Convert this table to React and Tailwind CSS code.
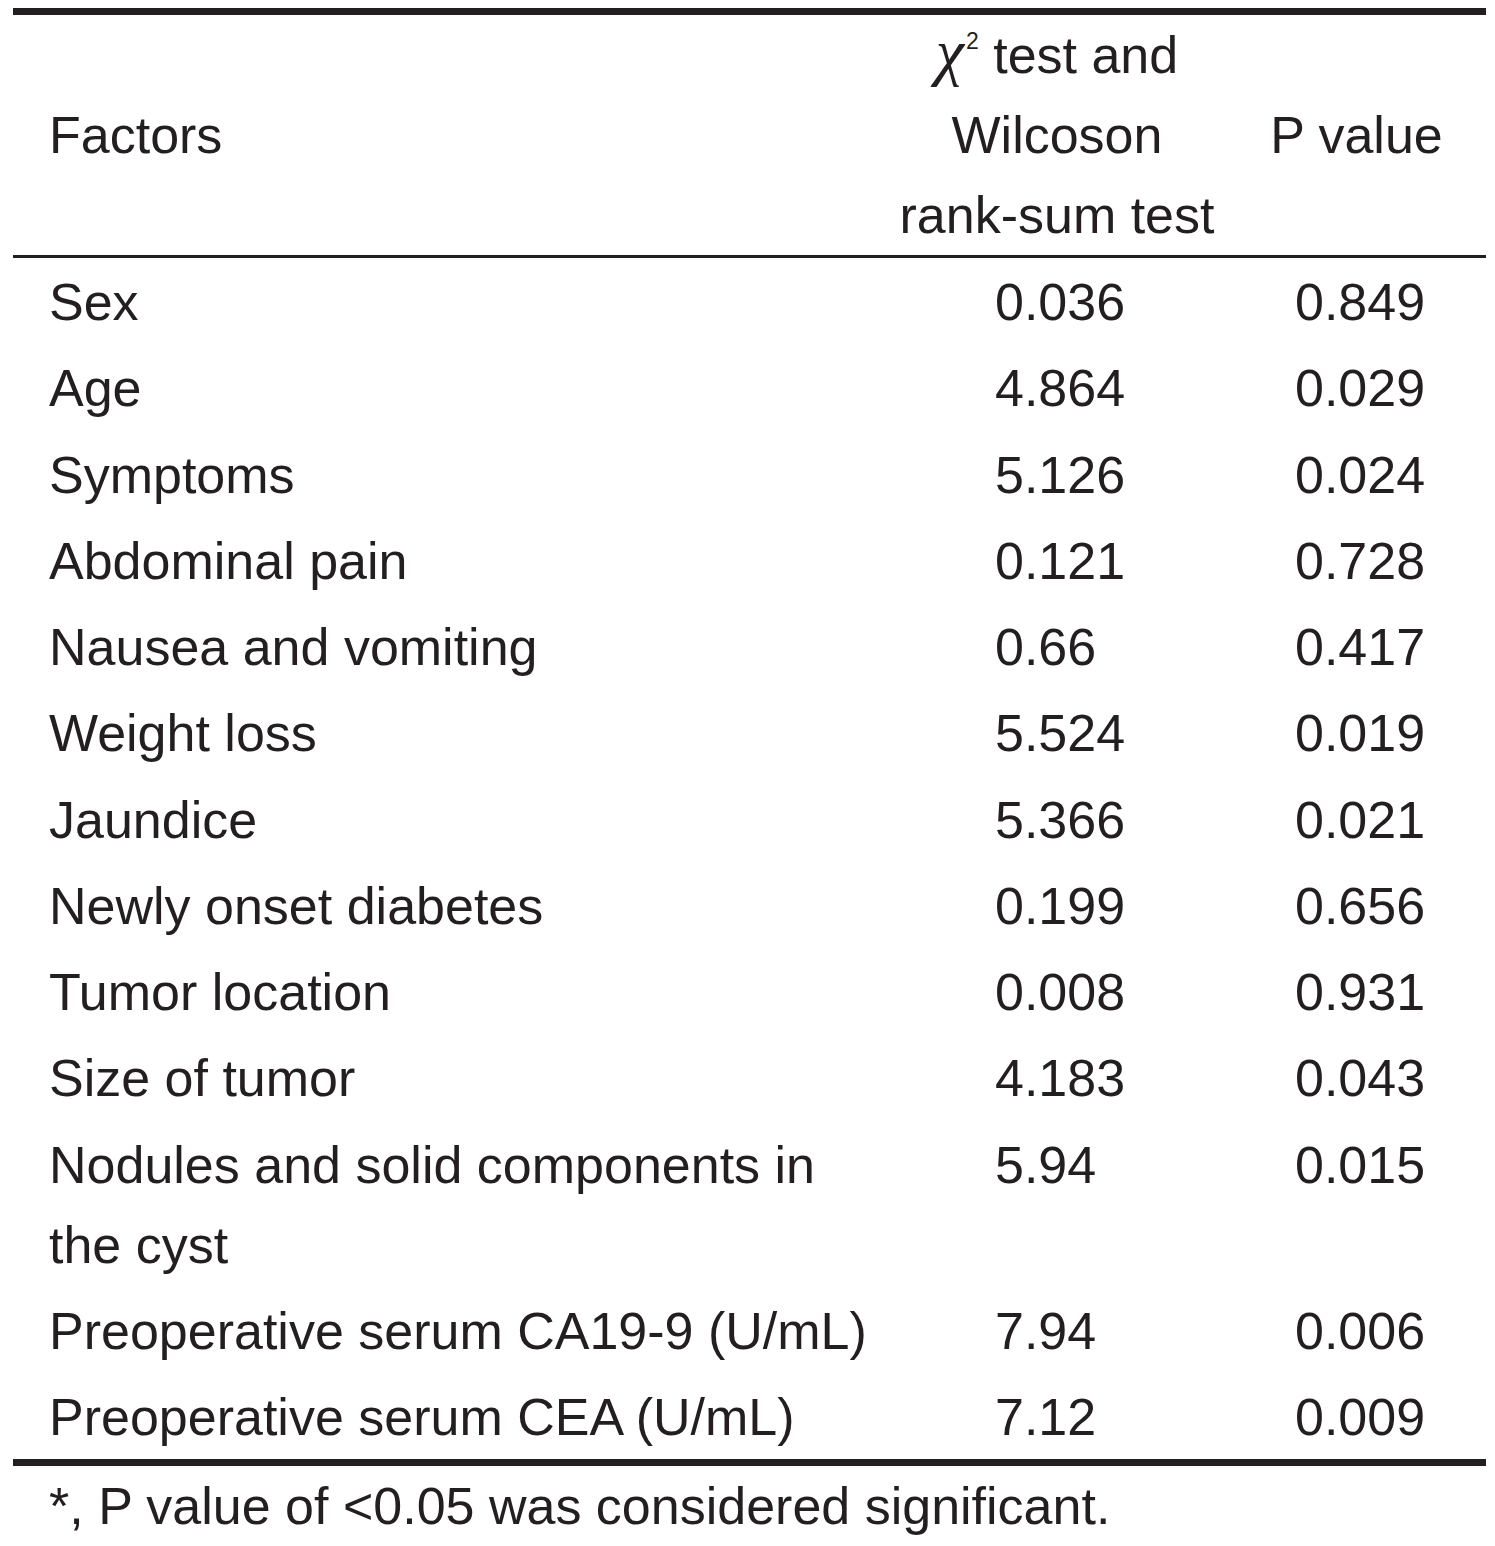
export default function App() {
  const rows = [
    [["Sex"], "0.036", "0.849"],
    [["Age"], "4.864", "0.029"],
    [["Symptoms"], "5.126", "0.024"],
    [["Abdominal pain"], "0.121", "0.728"],
    [["Nausea and vomiting"], "0.66", "0.417"],
    [["Weight loss"], "5.524", "0.019"],
    [["Jaundice"], "5.366", "0.021"],
    [["Newly onset diabetes"], "0.199", "0.656"],
    [["Tumor location"], "0.008", "0.931"],
    [["Size of tumor"], "4.183", "0.043"],
    [["Nodules and solid components in", "the cyst"], "5.94", "0.015"],
    [["Preoperative serum CA19-9 (U/mL)"], "7.94", "0.006"],
    [["Preoperative serum CEA (U/mL)"], "7.12", "0.009"],
  ];
  return (
    <div
      className="w-[1495px] h-[1546px] bg-white text-[#231f20] text-[52px] leading-[80px] pt-[8px]"
      style={{ fontFamily: '"Liberation Sans", Arial, sans-serif' }}
    >
      <div className="ml-[13px] w-[1473px]">
        <div className="border-t-[7px] border-b-[3px] border-[#231f20] grid grid-cols-[874px_340px_259px]">
          <div className="pl-[36px] flex items-center">Factors</div>
          <div className="text-center">
            <div>
              <span
                className="text-[64px] leading-none italic"
                style={{ fontFamily: '"Liberation Serif", "Times New Roman", serif' }}
              >
                χ
              </span>
              <span className="text-[23px] leading-none align-[24px] ml-[2px]">2</span>
              <span> test and</span>
            </div>
            <div>Wilcoson</div>
            <div>rank-sum test</div>
          </div>
          <div className="flex items-center justify-center">P value</div>
        </div>
        <div className="border-b-[7px] border-[#231f20]">
          {rows.map((r, i) => (
            <div key={i} className="grid grid-cols-[874px_340px_259px] pt-[4px] pb-[2.25px]">
              <div className="pl-[36px]">
                {r[0].map((l, j) => (
                  <div key={j}>{l}</div>
                ))}
              </div>
              <div className="pl-[108px]">{r[1]}</div>
              <div className="pl-[68px]">{r[2]}</div>
            </div>
          ))}
        </div>
        <div className="pl-[36px]">*, P value of &lt;0.05 was considered significant.</div>
      </div>
    </div>
  );
}
